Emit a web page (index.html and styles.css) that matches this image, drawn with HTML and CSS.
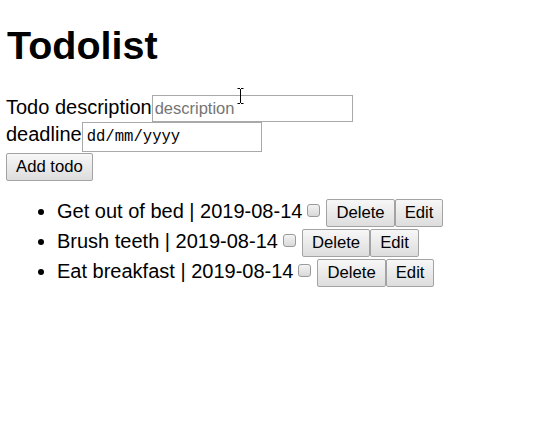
FILE: index.html
```html
<!DOCTYPE html>
<html lang="en">
<head>
<meta charset="utf-8">
<title>Todolist</title>
<link rel="stylesheet" href="styles.css">
</head>
<body>
<h1 class="title">Todolist</h1>
<form class="todo-form">
  <div class="field"><label class="field-label" for="desc">Todo description</label><input id="desc" class="text-input desc-input" type="text" placeholder="description"></div>
  <div class="field"><label class="field-label" for="deadline">deadline</label><input id="deadline" class="text-input date-input" type="text" placeholder="dd/mm/yyyy"></div>
  <div class="form-actions"><button type="button" class="btn">Add todo</button></div>
</form>
<ul class="todo-list">
  <li class="todo-item"><span class="todo-text">Get out of bed | 2019-08-14</span><input type="checkbox" class="check"><button type="button" class="btn">Delete</button><button type="button" class="btn">Edit</button></li>
  <li class="todo-item"><span class="todo-text">Brush teeth | 2019-08-14</span><input type="checkbox" class="check"><button type="button" class="btn">Delete</button><button type="button" class="btn">Edit</button></li>
  <li class="todo-item"><span class="todo-text">Eat breakfast | 2019-08-14</span><input type="checkbox" class="check"><button type="button" class="btn">Delete</button><button type="button" class="btn">Edit</button></li>
</ul>
<svg class="ibeam" width="7" height="16" viewBox="0 0 7 16" aria-hidden="true">
  <path d="M0.5 0.5h2.5M4 0.5h2.5M3.5 1v14M0.5 15.5h2.5M4 15.5h2.5" stroke="#000" stroke-width="1" fill="none"/>
</svg>
</body>
</html>
```
FILE: styles.css
```css
html, body {
  background: #fff;
}
body {
  margin: 0 6px;
  font-family: "Liberation Sans", Arial, sans-serif;
  font-size: 20px;
  color: #000;
  position: relative;
}
.title {
  font-size: 39.5px;
  font-weight: bold;
  margin: 23px 0 28px 1px;
  line-height: 44px;
}
.todo-form {
  display: flex;
  flex-direction: column;
  align-items: flex-start;
}
.field {
  display: flex;
  align-items: baseline;
}
.field-label {
  line-height: 23px;
}
.text-input {
  box-sizing: border-box;
  border: 1px solid #a9a9a9;
  border-radius: 0;
  margin: 0;
  outline: none;
  background: #fff;
  color: #000;
}
.desc-input {
  width: 201px;
  height: 27px;
  padding: 0 2px;
  font-family: "Liberation Sans", Arial, sans-serif;
  font-size: 16.5px;
}
.desc-input::placeholder {
  color: #757575;
}
.date-input {
  width: 180px;
  height: 30px;
  padding: 0 4px;
  font-family: "Liberation Mono", "Courier New", monospace;
  font-size: 15.6px;
}
.date-input::placeholder {
  color: #000;
}
.form-actions {
  margin-top: 1px;
}
.btn {
  box-sizing: border-box;
  font-family: "Liberation Sans", Arial, sans-serif;
  font-size: 16.7px;
  line-height: normal;
  color: #000;
  padding: 3px 9px;
  height: 28px;
  margin: 0;
  border: 1px solid #a3a3a3;
  border-radius: 2px;
  background: linear-gradient(#f7f7f7, #dddddd);
  vertical-align: baseline;
}
.todo-list {
  margin: 16px 0 0;
  padding: 0 0 0 51px;
}
.todo-item {
  line-height: 29px;
}
.check {
  appearance: none;
  -webkit-appearance: none;
  box-sizing: border-box;
  width: 13px;
  height: 13px;
  margin: 0 6px 1px 5px;
  border: 1px solid #9a9a9a;
  border-radius: 3px;
  background: linear-gradient(#f3f3f3, #d9d9d9);
  vertical-align: baseline;
}
.ibeam {
  position: absolute;
  left: 231px;
  top: 88px;
}
```
